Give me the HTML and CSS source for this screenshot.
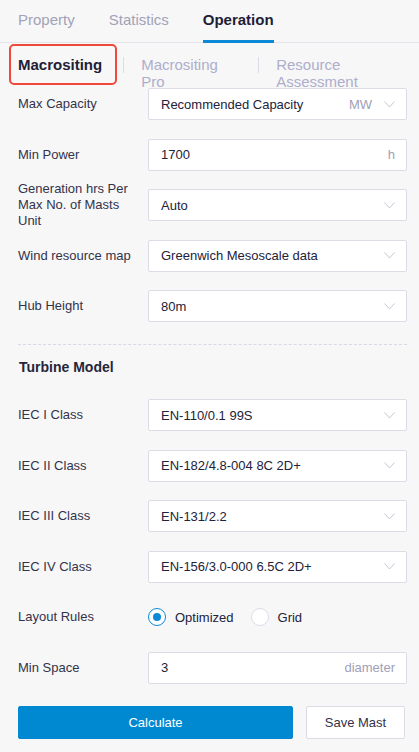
FILE: index.html
```html
<!DOCTYPE html>
<html lang="en">

<head>
    <meta charset="UTF-8">
    <meta name="viewport" content="width=device-width, initial-scale=1.0">
    <title>Operation</title>
    <link rel="stylesheet" href="styles.css">
</head>

<body>
    <div class="panel">
        <div class="tabs">
            <div class="tab">Property</div>
            <div class="tab">Statistics</div>
            <div class="tab active">Operation</div>
        </div>

        <div class="subtabs">
            <div class="subtab current">Macrositing</div>
            <div class="sep"></div>
            <div class="subtab">Macrositing Pro</div>
            <div class="sep"></div>
            <div class="subtab">Resource Assessment</div>
        </div>

        <div class="form">
            <div class="group">
                <div class="row">
                    <label>Max Capacity</label>
                    <div class="field select">
                        <span class="value">Recommended Capacity</span>
                        <span class="unit">MW</span>
                        <svg class="arrow" width="11" height="7" viewBox="0 0 11 7"><path d="M0.5 0.5 L5.5 6 L10.5 0.5" /></svg>
                    </div>
                </div>
                <div class="row">
                    <label>Min Power</label>
                    <div class="field">
                        <span class="value">1700</span>
                        <span class="unit">h</span>
                    </div>
                </div>
                <div class="row">
                    <label>Generation hrs Per Max No. of Masts Unit</label>
                    <div class="field select">
                        <span class="value">Auto</span>
                        <svg class="arrow" width="11" height="7" viewBox="0 0 11 7"><path d="M0.5 0.5 L5.5 6 L10.5 0.5" /></svg>
                    </div>
                </div>
                <div class="row">
                    <label>Wind resource map</label>
                    <div class="field select">
                        <span class="value">Greenwich Mesoscale data</span>
                        <svg class="arrow" width="11" height="7" viewBox="0 0 11 7"><path d="M0.5 0.5 L5.5 6 L10.5 0.5" /></svg>
                    </div>
                </div>
                <div class="row">
                    <label>Hub Height</label>
                    <div class="field select">
                        <span class="value">80m</span>
                        <svg class="arrow" width="11" height="7" viewBox="0 0 11 7"><path d="M0.5 0.5 L5.5 6 L10.5 0.5" /></svg>
                    </div>
                </div>
            </div>

            <hr class="divider">

            <h2>Turbine Model</h2>

            <div class="group">
                <div class="row">
                    <label>IEC I Class</label>
                    <div class="field select">
                        <span class="value">EN-110/0.1 99S</span>
                        <svg class="arrow" width="11" height="7" viewBox="0 0 11 7"><path d="M0.5 0.5 L5.5 6 L10.5 0.5" /></svg>
                    </div>
                </div>
                <div class="row">
                    <label>IEC II Class</label>
                    <div class="field select">
                        <span class="value">EN-182/4.8-004 8C 2D+</span>
                        <svg class="arrow" width="11" height="7" viewBox="0 0 11 7"><path d="M0.5 0.5 L5.5 6 L10.5 0.5" /></svg>
                    </div>
                </div>
                <div class="row">
                    <label>IEC III Class</label>
                    <div class="field select">
                        <span class="value">EN-131/2.2</span>
                        <svg class="arrow" width="11" height="7" viewBox="0 0 11 7"><path d="M0.5 0.5 L5.5 6 L10.5 0.5" /></svg>
                    </div>
                </div>
                <div class="row">
                    <label>IEC IV Class</label>
                    <div class="field select">
                        <span class="value">EN-156/3.0-000 6.5C 2D+</span>
                        <svg class="arrow" width="11" height="7" viewBox="0 0 11 7"><path d="M0.5 0.5 L5.5 6 L10.5 0.5" /></svg>
                    </div>
                </div>
                <div class="row">
                    <label>Layout Rules</label>
                    <div class="radios">
                        <span class="radio checked"></span>
                        <span class="radio-text">Optimized</span>
                        <span class="radio"></span>
                        <span class="radio-text">Grid</span>
                    </div>
                </div>
                <div class="row">
                    <label>Min Space</label>
                    <div class="field">
                        <span class="value">3</span>
                        <span class="unit">diameter</span>
                    </div>
                </div>
            </div>

            <div class="actions">
                <button class="btn primary">Calculate</button>
                <button class="btn">Save Mast</button>
            </div>
        </div>
    </div>
</body>

</html>
```

FILE: styles.css
```css
body {
    margin: 0;
    background-color: #f7f7f8;
    font-family: 'Liberation Sans', Arial, sans-serif;
    color: #2e2e44;
}

.panel {
    width: 419px;
}

/* main tabs */
.tabs {
    display: flex;
    padding-left: 18px;
    border-bottom: 1px solid #e4e4ea;
    height: 42px;
}

.tab {
    font-size: 15px;
    line-height: 40px;
    color: #a2a2b6;
    margin-right: 34px;
    height: 40px;
}

.tab.active {
    color: #1f2036;
    font-weight: bold;
    border-bottom: 3px solid #0a8ad6;
}

/* sub tabs */
.subtabs {
    display: flex;
    align-items: flex-start;
    height: 43px;
    padding-left: 9px;
    margin-top: 1px;
}

.subtab {
    font-size: 15px;
    line-height: 17px;
    color: #aeaecb;
    width: 100px;
    margin-top: 12px;
    padding-left: 17px;
}

.subtab.current {
    width: auto;
    margin-top: 0;
    height: 37px;
    display: flex;
    align-items: center;
    padding: 0 13px 0 7px;
    border: 2px solid #f0493c;
    border-radius: 5px;
    color: #1f2036;
    font-weight: bold;
}

.sep {
    width: 1px;
    height: 16px;
    margin-top: 13px;
    margin-left: 6px;
    background-color: #dcdce8;
}

.subtab + .sep {
    margin-left: 17px;
}

.current + .sep {
    margin-left: 6px;
}

/* form */
.form {
    padding: 1px 12px 0 18px;
}

.group {
    display: flex;
    flex-direction: column;
    gap: 18.5px;
}

.row {
    display: flex;
    align-items: center;
    height: 32px;
}

.row label {
    width: 125px;
    margin-right: 5px;
    font-size: 13px;
    line-height: 16px;
    color: #33334a;
    flex-shrink: 0;
}

.field {
    flex: 1;
    height: 30px;
    display: flex;
    align-items: center;
    background-color: #fff;
    border: 1px solid #dcdce8;
    border-radius: 2px;
    padding: 0 11px 0 12px;
    font-size: 13px;
}

.value {
    flex: 1;
    color: #22223a;
}

.unit {
    color: #a0a0b8;
}

.select .unit {
    margin-right: 12px;
}

.arrow {
    fill: none;
    stroke: #c6c6d4;
    stroke-width: 1;
}

.divider {
    border: none;
    border-top: 1px dashed #d8d8e6;
    margin: 22px 0 0 0;
}

h2 {
    font-size: 14px;
    line-height: 20px;
    margin: 12px 0 22px 1px;
    color: #26263a;
}

/* radio buttons */
.radios {
    display: flex;
    align-items: center;
    font-size: 13px;
    color: #22223a;
}

.radio {
    width: 16px;
    height: 16px;
    border: 1px solid #dcdce8;
    border-radius: 50%;
    background-color: #fff;
    margin-right: 9px;
    display: flex;
    align-items: center;
    justify-content: center;
}

.radio.checked {
    border-color: #0a8ad6;
}

.radio.checked::after {
    content: "";
    width: 8px;
    height: 8px;
    border-radius: 50%;
    background-color: #0a8ad6;
}

.radio-text {
    margin-right: 17px;
}

/* bottom buttons */
.actions {
    display: flex;
    gap: 13px;
    margin-top: 22px;
    padding-right: 2px;
}

.btn {
    height: 33px;
    font-family: inherit;
    font-size: 13px;
    border-radius: 2px;
    border: 1px solid #dcdce8;
    background-color: #fff;
    color: #33334a;
    width: 99px;
    cursor: pointer;
}

.btn.primary {
    flex: 1;
    background-color: #0088d1;
    border-color: #0088d1;
    color: #fff;
}
```
